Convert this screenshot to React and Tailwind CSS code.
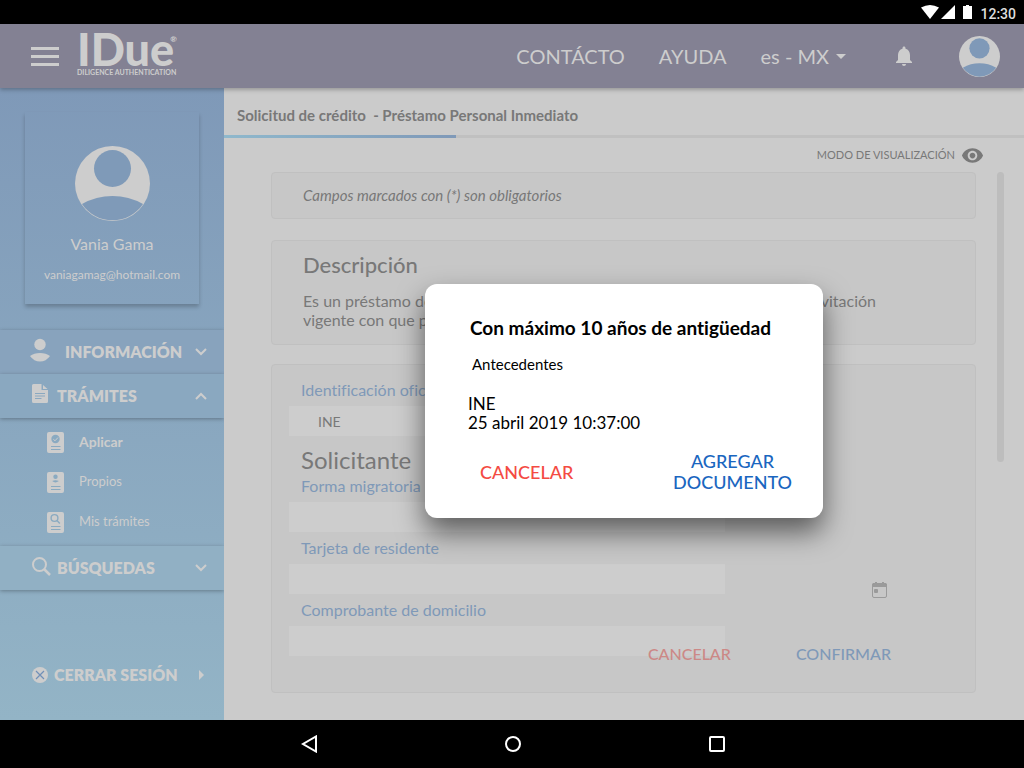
import React, { useState } from "react";
import {
  MdArrowDropDown,
  MdArrowRight,
  MdNotifications,
  MdVisibility,
} from "react-icons/md";

const Avatar = ({ className, fill }) => (
  <svg viewBox="0 0 75 75" className={className} aria-hidden="true">
    <circle cx="37.5" cy="37.5" r="37.5" fill="#cdcdcd" />
    <circle cx="37.5" cy="22.5" r="18.5" fill={fill} />
    <path d="M7 58A62 62 0 0 1 68 58A36.6 36.6 0 0 1 7 58Z" fill={fill} />
  </svg>
);

const Chevron = ({ up }) => (
  <svg
    viewBox="0 0 12 8"
    className="w-3 h-2 shrink-0"
    fill="none"
    stroke="currentColor"
    strokeWidth="2"
  >
    <path d={up ? "M1 7L6 2L11 7" : "M1 1L6 6L11 1"} />
  </svg>
);

const UserIcon = () => (
  <svg viewBox="0 0 20 24" className="w-5 h-6" fill="currentColor">
    <circle cx="10" cy="6.5" r="5.7" />
    <path d="M0 18Q4 15 10 15T20 18Q16 23.5 10 23.5T0 18Z" />
  </svg>
);

const FileIcon = () => (
  <svg viewBox="0 0 16 20" className="ml-[2px] w-4 h-5">
    <path
      d="M1.5 0H9.5V6H16V17.500Q16 19 14.500 19H1.500Q0 19 0 17.500V1.500Q0 0 1.500 0ZM11 1L15.500 5H11Z"
      fill="currentColor"
    />
    <path d="M3 9.500H13M3 12H13M3 14.500H9.500" stroke="#8aa8c0" />
  </svg>
);

const SearchIcon = () => (
  <svg
    viewBox="0 0 19 19"
    className="ml-[2px] w-[19px] h-[19px]"
    fill="none"
    stroke="currentColor"
    strokeWidth="2"
  >
    <circle cx="7.500" cy="7.500" r="6.500" />
    <path d="M12 12L18 18" strokeWidth="2.500" />
  </svg>
);

// Small page icon used by the submenu, the drawing on it changes per item
const PageIcon = ({ children }) => (
  <svg viewBox="0 0 17 21" className="w-[17px] h-[21px] shrink-0">
    <rect width="17" height="21" rx="2" fill="currentColor" />
    <path d="M4 14.500H13.500M4 17.500H13.500" stroke="#8aaac1" />
    {children}
  </svg>
);

const submenu = [
  {
    label: "Aplicar",
    active: true,
    icon: (
      <PageIcon>
        <circle cx="8.500" cy="7" r="4.200" fill="#8aaac1" />
        <path d="M6.300 7.200L8 8.800L11 5.500" stroke="#cdcdcd" fill="none" />
      </PageIcon>
    ),
  },
  {
    label: "Propios",
    icon: (
      <PageIcon>
        <circle cx="8.500" cy="4.800" r="2.200" fill="#8aaac1" />
        <path d="M5.200 9Q8.500 7.500 11.800 9Q8.500 11.800 5.200 9Z" fill="#8aaac1" />
      </PageIcon>
    ),
  },
  {
    label: "Mis trámites",
    icon: (
      <PageIcon>
        <g stroke="#8aaac1" strokeWidth="1.400" fill="none">
          <circle cx="7.500" cy="6" r="3.400" />
          <path d="M10 8.500L12.800 11.500" />
        </g>
      </PageIcon>
    ),
  },
];

const MenuHeader = ({ icon, label, open, onClick, className }) => (
  <button
    type="button"
    onClick={onClick}
    aria-expanded={open}
    className={`w-full h-11 flex items-center pl-[30px] pr-[17px] text-base font-extrabold shadow-[0_1px_4px_rgba(0,0,0,0.3)] ${className}`}
  >
    <span className="mb-1">{icon}</span>
    {label}
    <span className="ml-auto">
      <Chevron up={open} />
    </span>
  </button>
);

const Sidebar = () => {
  const [open, setOpen] = useState(true);

  return (
    <aside className="w-56 shrink-0 flex flex-col text-[#cdcdcd] bg-linear-to-b from-[#7f99b8] to-[#93b4c6]">
      <div className="mx-[25px] mt-6 h-48 pt-[34px] flex flex-col items-center shadow-[0_3px_4px_rgba(0,0,0,0.22)]">
        <Avatar className="w-[75px] h-[75px]" fill="#7f9ab8" />
        <div className="mt-[11px] text-base leading-6">Vania Gama</div>
        <div className="mt-[7px] text-xs leading-6">vaniagamag@hotmail.com</div>
      </div>
      <nav className="mt-[26px]">
        <MenuHeader
          icon={<UserIcon />}
          label={<span className="ml-[15px]">INFORMACIÓN</span>}
          open={false}
          className="bg-[#88a3bd]"
        />
        <MenuHeader
          icon={<FileIcon />}
          label={<span className="ml-[9px]">TRÁMITES</span>}
          open={open}
          onClick={() => setOpen(!open)}
          className="bg-[#8aa8c0]"
        />
        {open && (
          <ul className="h-32 pt-1 pb-1 flex flex-col justify-around text-[13px]">
            {submenu.map((item) => (
              <li key={item.label}>
                <a href="#" className="flex items-center pl-[47px]">
                  {item.icon}
                  <span className={item.active ? "ml-[15px] font-bold text-sm" : "ml-[15px]"}>
                    {item.label}
                  </span>
                </a>
              </li>
            ))}
          </ul>
        )}
        <MenuHeader
          icon={<SearchIcon />}
          label={<span className="ml-[6px]">BÚSQUEDAS</span>}
          open={false}
          className="bg-[#91b0c4]"
        />
      </nav>
      <button
        type="button"
        className="mt-auto mb-[33px] flex items-center pl-8 pr-[11px] text-base font-extrabold"
      >
        <svg viewBox="0 0 16 16" className="w-4 h-4">
          <circle cx="8" cy="8" r="8" fill="currentColor" />
          <path d="M4 4L12 12M12 4L4 12" stroke="#7190b8" strokeWidth="1.200" />
        </svg>
        <span className="ml-[6px]">CERRAR SESIÓN</span>
        <MdArrowRight className="ml-auto text-2xl" />
      </button>
    </aside>
  );
};

const StatusBar = () => (
  <div className="h-6 bg-black flex items-center justify-end pr-2 text-white">
    <svg viewBox="0 0 52 16" className="w-[52px] h-4" fill="currentColor">
      <path d="M1 3.500Q10 -1.500 19 3.500L10 15Z" />
      <path d="M35 1V15H21Z" />
      <path d="M43 2H46V1H49V2H52V15H43Z" />
    </svg>
    <span className="ml-2 mt-1 text-sm leading-5 font-medium font-['Roboto',sans-serif] text-[#dedede]">
      12:30
    </span>
  </div>
);

const Header = () => (
  <header className="relative z-10 h-16 pl-[31px] pr-6 flex items-center bg-[#838193] text-[#cdcdcd] shadow-[0_2px_4px_rgba(0,0,0,0.25)]">
    <button type="button" aria-label="Menú" className="flex flex-col gap-[5px]">
      <span className="w-7 h-[3px] bg-current"></span>
      <span className="w-7 h-[3px] bg-current"></span>
      <span className="w-7 h-[3px] bg-current"></span>
    </button>
    <div className="ml-[18px] pb-[2px] flex flex-col">
      <div className="flex items-start text-[45px] leading-8 font-black">
        IDue<sup className="-ml-1 text-[8px] leading-3 top-0">®</sup>
      </div>
      <div className="mt-[2px] text-[7px] leading-[10px] font-bold">DILIGENCE AUTHENTICATION</div>
    </div>
    <nav className="ml-auto flex items-center gap-[34px] text-xl">
      <a href="#">CONTÁCTO</a>
      <a href="#">AYUDA</a>
      <button type="button" className="flex items-center">
        es - MX <MdArrowDropDown className="text-2xl" />
      </button>
    </nav>
    <button type="button" aria-label="Notificaciones" className="ml-[39px]">
      <MdNotifications className="text-2xl" />
    </button>
    <button type="button" aria-label="Perfil" className="ml-[43px]">
      <Avatar className="w-[41px] h-[41px]" fill="#7f99b8" />
    </button>
  </header>
);

const Field = ({ id, label, value, children }) => (
  <div>
    <label htmlFor={id} className="block pl-3 text-base leading-8 text-[#7f99b8]">
      {label}
    </label>
    <div className="flex items-end">
      <input
        id={id}
        type="text"
        defaultValue={value}
        className="w-[436px] h-[30px] pl-[29px] text-sm bg-[#cdcdcd]"
      />
      {children}
    </div>
  </div>
);

const Dialog = ({ onClose }) => (
  <div className="absolute inset-0 z-20 flex items-center justify-center pb-[6px]">
    <div
      role="dialog"
      aria-labelledby="dialog-title"
      className="w-[398px] pt-[30px] pb-[25px] px-[43px] rounded-xl bg-white text-black shadow-[0_14px_28px_rgba(0,0,0,0.55)]"
    >
      <h2 id="dialog-title" className="pl-[2px] text-[19px] leading-7 font-bold whitespace-nowrap">
        Con máximo 10 años de antigüedad
      </h2>
      <p className="mt-3 pl-1 text-[15px] leading-5">Antecedentes</p>
      <p className="mt-5 text-[17px] leading-[19px]">
        INE
        <br />
        25 abril 2019 10:37:00
      </p>
      <div className="mt-[19px] -mr-3 pl-3 flex items-center justify-between text-lg leading-[21px] font-medium">
        <button type="button" className="text-[#f44b43]" onClick={onClose}>
          CANCELAR
        </button>
        <button type="button" className="text-[#1a66c0]">
          AGREGAR
          <br />
          DOCUMENTO
        </button>
      </div>
    </div>
  </div>
);

const card = "rounded border border-[#c0c0c0] bg-[#c7c7c7]";

const App = () => {
  const [showDialog, setShowDialog] = useState(true);

  return (
    <div className="min-h-screen flex flex-col font-['Lato','Liberation_Sans',sans-serif] [font-variant-ligatures:no-common-ligatures]">
      <StatusBar />
      <Header />
      <div className="flex-1 flex">
        <Sidebar />
        <main className="relative flex-1 min-w-0 bg-[#cbcbcb] text-[#787878]">
          <h1 className="h-[47px] pt-2 pl-[13px] flex items-center text-[15px] font-bold whitespace-pre">
            {"Solicitud de crédito  - Préstamo Personal Inmediato"}
          </h1>
          <div className="h-[3px] bg-[#c0c0c0]">
            <div className="h-full w-[29%] bg-linear-to-r from-[#8fb8cc] to-[#7f99b8]"></div>
          </div>
          <div className="h-[34px] pr-10 flex items-center justify-end text-[11px]">
            MODO DE VISUALIZACIÓN
            <button type="button" aria-label="Modo de visualización" className="ml-[6px]">
              <MdVisibility className="text-[23px]" />
            </button>
          </div>
          <div className="flex items-start pl-[47px] pr-5">
            <div className="flex-1 min-w-0">
              <div className={`${card} h-[47px] pl-[31px] flex items-center text-[15px] italic`}>
                Campos marcados con (*) son obligatorios
              </div>
              <section className={`${card} mt-[21px] h-[105px] pl-[31px] pr-14 pt-2`}>
                <h2 className="text-[22px] leading-8 font-medium">Descripción</h2>
                <p className="mt-[10px] flex justify-between text-base leading-[19px]">
                  <span>
                    Es un préstamo de
                    <br />
                    vigente con que p
                  </span>
                  <span className="pr-[43px]">vitación</span>
                </p>
              </section>
              <form
                className={`${card} mt-[19px] h-[329px] pl-[17px] pt-[9px]`}
                onSubmit={(e) => e.preventDefault()}
              >
                <Field id="identificacion" label="Identificación oficial" value="INE" />
                <h2 className="mt-2 pl-3 text-2xl leading-8">Solicitante</h2>
                <div className="-mt-[6px]">
                  <Field id="forma" label="Forma migratoria" />
                </div>
                <Field id="tarjeta" label="Tarjeta de residente">
                  <button type="button" aria-label="Calendario" className="ml-[147px] -mb-1">
                    <svg viewBox="0 0 15 16" className="w-[15px] h-4 text-[#9a9a9a]">
                      <path d="M3 0H5V1H10V0H12V1H13Q15 1 15 3V5H0V3Q0 1 2 1H3Z" fill="currentColor" />
                      <rect x="0.500" y="1.500" width="14" height="14" rx="1.500" fill="none" stroke="currentColor" />
                      <rect x="2" y="7" width="4" height="4" rx="1" fill="currentColor" />
                    </svg>
                  </button>
                </Field>
                <Field id="comprobante" label="Comprobante de domicilio" />
                <div className="relative -mt-[14px] mr-[84px] flex justify-end gap-[65px] text-base font-medium">
                  <button type="button" className="text-[#cc8886]">
                    CANCELAR
                  </button>
                  <button type="submit" className="text-[#7f99b8]">
                    CONFIRMAR
                  </button>
                </div>
              </form>
            </div>
            <div className="ml-[21px] w-[7px] h-[290px] rounded-full bg-[#bdbdbd]"></div>
          </div>
          {showDialog && <Dialog onClose={() => setShowDialog(false)} />}
        </main>
      </div>
      <nav className="h-12 pl-[2px] bg-black flex items-center justify-center gap-[188px] text-white">
        <button type="button" aria-label="Atrás">
          <svg viewBox="0 0 16 18" className="w-4 h-[18px]" fill="none" stroke="currentColor" strokeWidth="2">
            <path d="M15 1.500V16.500L2 9Z" />
          </svg>
        </button>
        <button type="button" aria-label="Inicio" className="w-4 h-4 rounded-full border-2 border-white"></button>
        <button type="button" aria-label="Recientes" className="w-4 h-4 rounded-xs border-2 border-white"></button>
      </nav>
    </div>
  );
};

export default App;
